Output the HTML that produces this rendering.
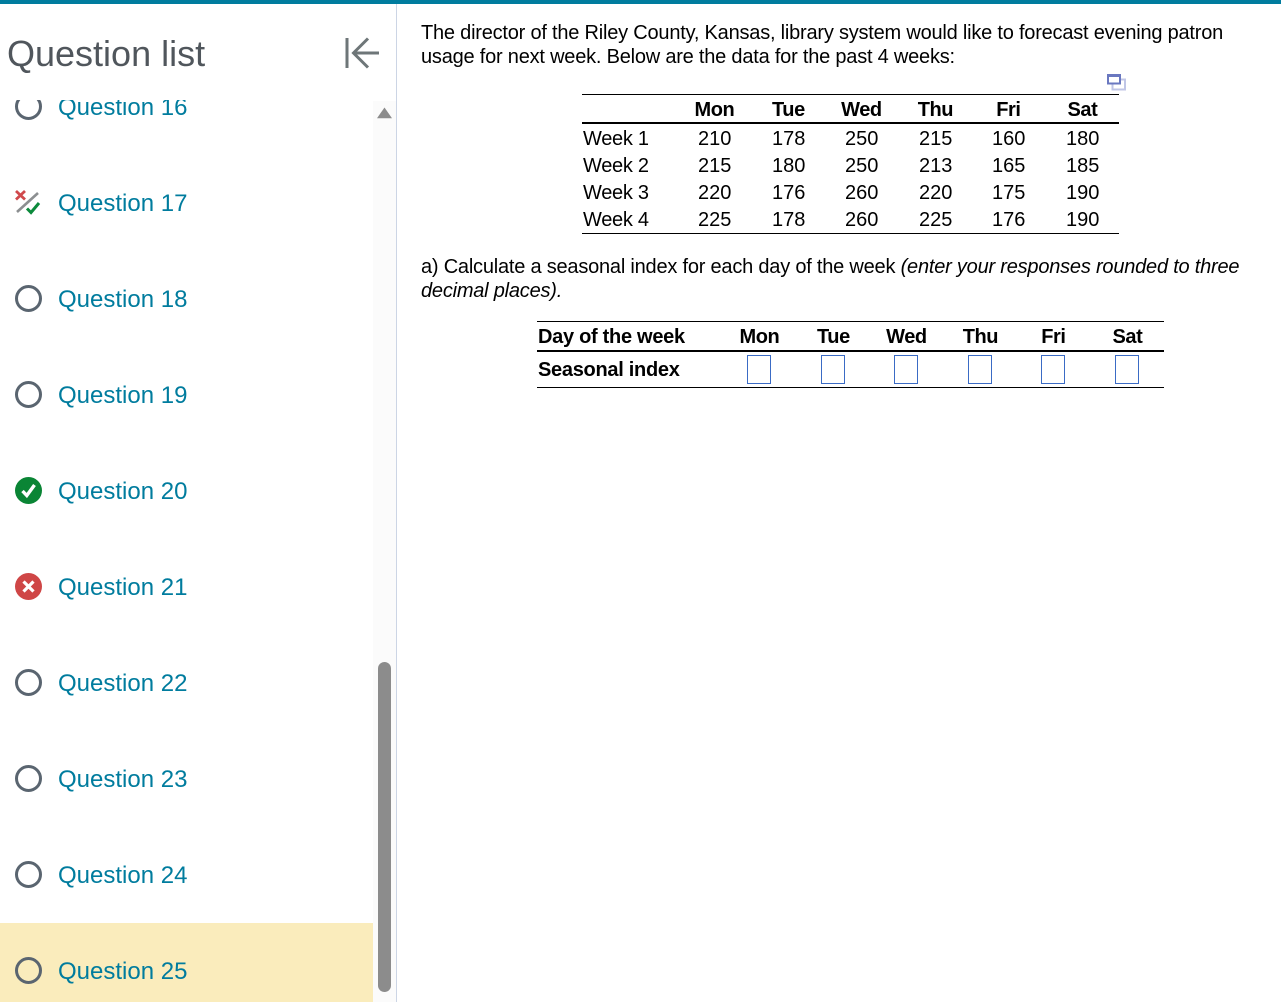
<!DOCTYPE html>
<html><head><meta charset="utf-8"><style>
html,body{margin:0;padding:0;background:#fff}
#p{position:relative;width:1281px;height:1002px;overflow:hidden;font-family:"Liberation Sans",sans-serif;color:#000;background:#fff}
.a{position:absolute;white-space:nowrap}
.q{position:absolute;left:58px;font-size:24px;line-height:28px;color:#007c9e;white-space:nowrap}
.t{position:absolute;font-size:20px;line-height:24px;white-space:nowrap;letter-spacing:-0.215px}
.w{letter-spacing:-0.3px}
.c{position:absolute;font-size:20px;line-height:24px;white-space:nowrap;transform:translateX(-50%);margin-left:0.7px}
.h{font-weight:bold;letter-spacing:-0.45px;margin-left:0.4px}
.b{font-weight:bold;letter-spacing:-0.29px}
.l{position:absolute;background:#000}
.i{position:absolute;top:355px;width:22px;height:27px;border:1px solid #3a6bc5;background:#fff}
.r{position:absolute;left:15px;border:3px solid #5a6570;border-radius:50%;box-sizing:border-box;width:27px;height:27px}
svg{position:absolute}
</style></head><body><div id="p">
<div class="a" style="left:0;top:0;width:1281px;height:4px;background:#007c9e"></div>
<div class="a" style="left:396px;top:4px;width:1px;height:998px;background:#ccd5e5"></div>
<div class="a" style="left:373px;top:101px;width:23px;height:901px;background:#fbfbfb"></div>
<div class="a" style="left:0;top:923px;width:373px;height:79px;background:#faecbc"></div>

<div class="a" style="left:7px;top:33px;font-size:36px;line-height:42px;color:#50565c">Question list</div>
<svg style="left:344px;top:36px" width="38" height="34" viewBox="0 0 38 34"><path d="M3 2V32M35 17H10M24 2.5L9.5 17L24 31.5" fill="none" stroke="#6e7678" stroke-width="3"/></svg>

<div class="a" style="left:0;top:94px;width:373px;height:30px;overflow:hidden">
<div class="r" style="top:-1px"></div>
<div class="q" style="top:0px">Question 16</div>
</div>
<div class="a" style="left:0;top:84px;width:373px;height:16px;background:#fff"></div>

<svg style="left:13px;top:188px" width="30" height="30" viewBox="0 0 30 30"><path d="M3 3L12 11.5M12 3L3 11.5" stroke="#d0494c" stroke-width="2.8" fill="none"/><path d="M4 24L25 5" stroke="#8c8f91" stroke-width="2.6" fill="none"/><path d="M14 20.5L18 24.5L26 15" stroke="#0c8a3c" stroke-width="3" fill="none"/></svg>
<div class="q" style="top:190px">Question 17</div>

<div class="r" style="top:285px"></div><div class="q" style="top:286px">Question 18</div>
<div class="r" style="top:381px"></div><div class="q" style="top:382px">Question 19</div>

<svg style="left:15px;top:477px" width="27" height="27" viewBox="0 0 27 27"><circle cx="13.5" cy="13.5" r="13.5" fill="#0a8535"/><path d="M7.5 14L11.8 18.5L19.5 8" stroke="#fff" stroke-width="3.4" fill="none"/></svg>
<div class="q" style="top:478px">Question 20</div>

<svg style="left:15px;top:573px" width="27" height="27" viewBox="0 0 27 27"><circle cx="13.5" cy="13.5" r="13.5" fill="#cf4646"/><path d="M8.5 8.5L18.5 18.5M18.5 8.5L8.5 18.5" stroke="#fff" stroke-width="3.2" fill="none"/></svg>
<div class="q" style="top:574px">Question 21</div>

<div class="r" style="top:669px"></div><div class="q" style="top:670px">Question 22</div>
<div class="r" style="top:765px"></div><div class="q" style="top:766px">Question 23</div>
<div class="r" style="top:861px"></div><div class="q" style="top:862px">Question 24</div>
<div class="r" style="top:957px"></div><div class="q" style="top:958px">Question 25</div>

<svg style="left:377px;top:107px" width="15" height="12" viewBox="0 0 15 12"><path d="M7.5 1L14.5 11H0.5Z" fill="#8c8c8c" stroke="#8c8c8c" stroke-width="0.6"/></svg>
<div class="a" style="left:378px;top:662px;width:13px;height:330px;border-radius:7px;background:#8c8c8c"></div>

<div class="t" style="left:421px;top:21px">The director of the Riley County, Kansas, library system would like to forecast evening patron</div>
<div class="t" style="left:421px;top:45px">usage for next week. Below are the data for the past 4 weeks:</div>

<svg style="left:1106px;top:73px" width="20" height="18" viewBox="0 0 20 18"><rect x="6.5" y="6.5" width="12.5" height="10" fill="#fff" stroke="#c0c6e6" stroke-width="2"/><rect x="2" y="2.5" width="12" height="8" fill="#fff" stroke="#6a78c0" stroke-width="2"/><rect x="1" y="1" width="14" height="3" fill="#6a78c0"/></svg>

<div class="l" style="left:582px;top:94px;width:537px;height:1px"></div>
<div class="l" style="left:582px;top:122px;width:537px;height:2px"></div>
<div class="l" style="left:582px;top:233px;width:537px;height:1px"></div>

<div class="c h" style="left:714px;top:98px">Mon</div><div class="c h" style="left:788px;top:98px">Tue</div><div class="c h" style="left:861px;top:98px">Wed</div><div class="c h" style="left:935px;top:98px">Thu</div><div class="c h" style="left:1008px;top:98px">Fri</div><div class="c h" style="left:1082px;top:98px">Sat</div>

<div class="t w" style="left:583px;top:127px">Week 1</div><div class="c" style="left:714px;top:127px">210</div><div class="c" style="left:788px;top:127px">178</div><div class="c" style="left:861px;top:127px">250</div><div class="c" style="left:935px;top:127px">215</div><div class="c" style="left:1008px;top:127px">160</div><div class="c" style="left:1082px;top:127px">180</div>
<div class="t w" style="left:583px;top:154px">Week 2</div><div class="c" style="left:714px;top:154px">215</div><div class="c" style="left:788px;top:154px">180</div><div class="c" style="left:861px;top:154px">250</div><div class="c" style="left:935px;top:154px">213</div><div class="c" style="left:1008px;top:154px">165</div><div class="c" style="left:1082px;top:154px">185</div>
<div class="t w" style="left:583px;top:181px">Week 3</div><div class="c" style="left:714px;top:181px">220</div><div class="c" style="left:788px;top:181px">176</div><div class="c" style="left:861px;top:181px">260</div><div class="c" style="left:935px;top:181px">220</div><div class="c" style="left:1008px;top:181px">175</div><div class="c" style="left:1082px;top:181px">190</div>
<div class="t w" style="left:583px;top:208px">Week 4</div><div class="c" style="left:714px;top:208px">225</div><div class="c" style="left:788px;top:208px">178</div><div class="c" style="left:861px;top:208px">260</div><div class="c" style="left:935px;top:208px">225</div><div class="c" style="left:1008px;top:208px">176</div><div class="c" style="left:1082px;top:208px">190</div>

<div class="t" style="left:421px;top:255px">a) Calculate a seasonal index for each day of the week <i>(enter your responses rounded to three</i></div>
<div class="t" style="left:421px;top:279px"><i>decimal places).</i></div>

<div class="l" style="left:537px;top:321px;width:627px;height:1px"></div>
<div class="l" style="left:537px;top:350px;width:627px;height:2px"></div>
<div class="l" style="left:537px;top:387px;width:627px;height:1px"></div>

<div class="t b" style="left:538px;top:325px">Day of the week</div>
<div class="c h" style="left:759px;top:325px">Mon</div><div class="c h" style="left:833px;top:325px">Tue</div><div class="c h" style="left:906px;top:325px">Wed</div><div class="c h" style="left:980px;top:325px">Thu</div><div class="c h" style="left:1053px;top:325px">Fri</div><div class="c h" style="left:1127px;top:325px">Sat</div>
<div class="t b" style="left:538px;top:358px">Seasonal index</div>
<div class="i" style="left:747px"></div><div class="i" style="left:821px"></div><div class="i" style="left:894px"></div><div class="i" style="left:968px"></div><div class="i" style="left:1041px"></div><div class="i" style="left:1115px"></div>
</div></body></html>
